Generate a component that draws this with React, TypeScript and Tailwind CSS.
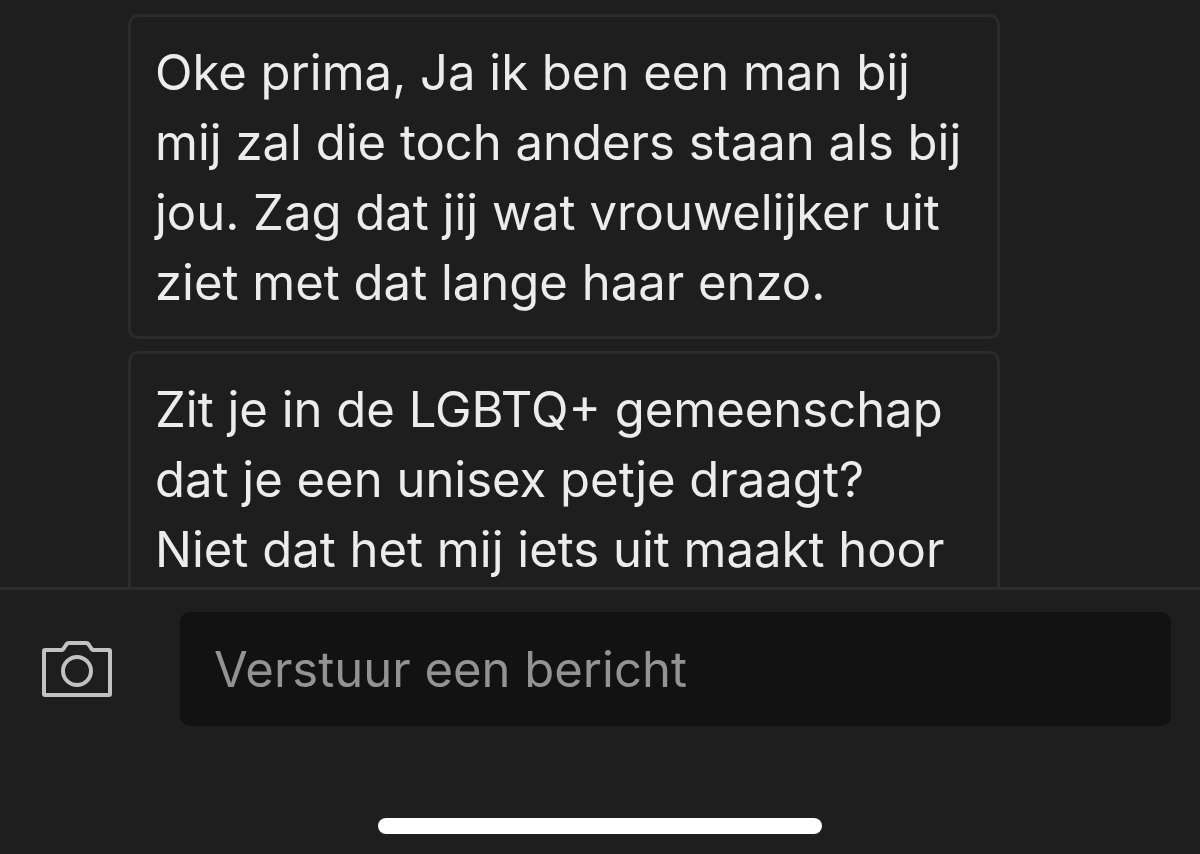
const messages = [
    ['Oke prima, Ja ik ben een man bij', 'mij zal die toch anders staan als bij', 'jou. Zag dat jij wat vrouwelijker uit', 'ziet met dat lange haar enzo.'],
    ['Zit je in de LGBTQ+ gemeenschap', 'dat je een unisex petje draagt?', 'Niet dat het mij iets uit maakt hoor'],
];

const CameraIcon = () => (
    <svg className="w-18 h-15" viewBox="0 0 72 60" fill="none" stroke="#c2c2c2" strokeWidth="4" strokeLinejoin="round">
        <path d="M5 11H21Q23 11 24 9L26 6Q27 4 29 4H46Q48 4 49 6L51 9Q52 11 54 11H69Q70 11 70 12V55Q70 56 69 56H5Q4 56 4 55V12Q4 11 5 11Z" />
        <circle cx="37" cy="32" r="14" />
    </svg>
);

const App = () => {
    return (
        <main className="flex flex-col h-screen overflow-hidden bg-[#1e1e1e] text-[#ececec] font-['Inter',sans-serif]">
            <section className="flex-1 min-h-0 overflow-hidden flex flex-col gap-3 pt-3.5 pl-32 pr-50">
                {messages.map((lines) => (
                    <p key={lines[0]} className="shrink-0 border-3 border-[#2b2b2b] rounded-[10px] px-6 pt-[21px] pb-[18px] text-[49px] leading-[70px] whitespace-nowrap">
                        {lines.map((line) => (
                            <span key={line} className="block">{line}</span>
                        ))}
                    </p>
                ))}
            </section>

            <form className="shrink-0 flex items-center border-t-3 border-[#2b2b2b] pt-[22px] pl-10 pr-[29px]">
                <button type="button" aria-label="Foto toevoegen">
                    <CameraIcon />
                </button>
                <input
                    type="text"
                    aria-label="Bericht"
                    placeholder="Verstuur een bericht"
                    className="flex-1 min-w-0 h-[114px] ml-17 px-[34px] rounded-[10px] bg-[#121212] text-[49px] placeholder:text-[#939393] focus:outline-none"
                />
            </form>

            <footer className="shrink-0 flex justify-center pt-23 pb-5">
                <div className="w-111 h-4 rounded-full bg-white" />
            </footer>
        </main>
    );
};

export default App;
